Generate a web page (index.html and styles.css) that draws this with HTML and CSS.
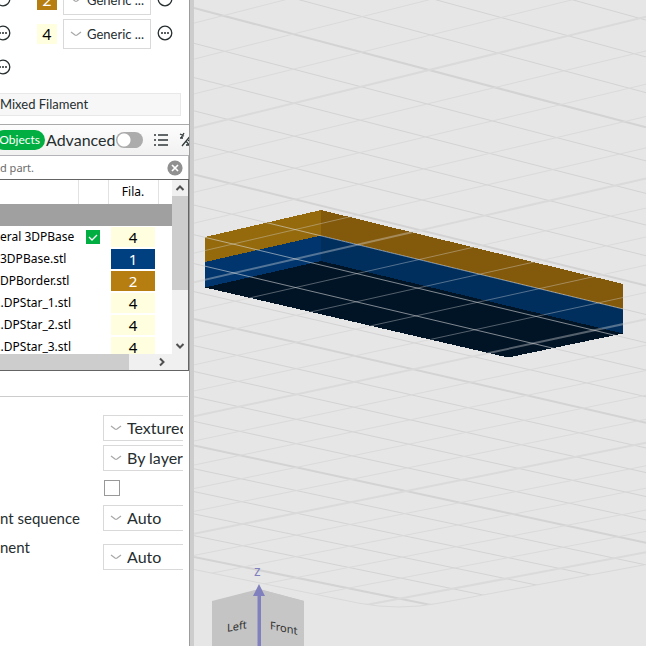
FILE: index.html
```
<!DOCTYPE html>
<html lang="en">
<head>
<meta charset="utf-8">
<meta name="viewport" content="width=device-width, initial-scale=1">
<title>Slicer</title>
<link rel="stylesheet" href="styles.css">
</head>
<body>
<svg class="defs" aria-hidden="true">
  <symbol id="chevron" viewBox="0 0 12 6"><path d="M1 1 L5 4 Q6 4.6 7 4 L11 1" fill="none" stroke="#a8a8a8" stroke-width="1.2"/></symbol>
  <symbol id="more" viewBox="0 0 16 16"><circle cx="8" cy="8" r="6.8" fill="none" stroke="#262e30" stroke-width="1.3"/><path d="M4 7.2h2v1.6h-2zM7 7.2h2v1.6h-2zM10 7.2h2v1.6h-2z" fill="#262e30"/></symbol>
</svg>
<aside class="sidebar">
  <section class="filaments">
    <div class="filament">
      <button class="icon" aria-label="More"><svg><use href="#more"/></svg></button>
      <span class="swatch gold">2</span>
      <span class="pick"><select aria-label="Filament 2"><option>Generic ...</option></select><svg><use href="#chevron"/></svg></span>
      <button class="icon" aria-label="More"><svg><use href="#more"/></svg></button>
    </div>
    <div class="filament">
      <button class="icon" aria-label="More"><svg><use href="#more"/></svg></button>
      <span class="swatch cream">4</span>
      <span class="pick"><select aria-label="Filament 4"><option>Generic ...</option></select><svg><use href="#chevron"/></svg></span>
      <button class="icon" aria-label="More"><svg><use href="#more"/></svg></button>
    </div>
    <div class="filament">
      <button class="icon" aria-label="More"><svg><use href="#more"/></svg></button>
    </div>
  </section>
  <button class="mixed">Mixed Filament</button>
  <div class="toolbar">
    <button class="pill">Objects</button>
    <label for="advanced">Advanced</label>
    <input type="checkbox" role="switch" id="advanced" class="switch">
    <button class="tool" aria-label="List"><svg viewBox="0 0 16 16"><path d="M1 3h2M1 8h2M1 13h2M5 3h10M5 8h10M5 13h10" stroke="#30383a" stroke-width="1.4" fill="none"/></svg></button>
    <button class="tool" aria-label="Compare"><svg viewBox="0 0 16 16"><path d="M1 2l4 2M5 1L2 6M1 6h3M3 14L12 3M7 9l4 5M9 8l4 3M7 13h5" stroke="#30383a" stroke-width="1.3" fill="none"/></svg></button>
  </div>
  <div class="search">
    <input type="text" aria-label="Search" value="d part.">
    <button aria-label="Clear"><svg viewBox="0 0 16 16"><circle cx="8" cy="8" r="7.6" fill="#909090"/><path d="M5 5l6 6M11 5l-6 6" stroke="#fff" stroke-width="1.7"/></svg></button>
  </div>
  <div class="objects">
    <div class="rows">
      <table>
        <thead><tr><th class="name"></th><th class="print"></th><th class="fila">Fila.</th><th></th></tr></thead>
        <tbody>
          <tr class="plate"><td colspan="4"></td></tr>
          <tr><td class="name">eral 3DPBase</td><td class="print"><span class="tick"><input type="checkbox" aria-label="Printable" checked><svg viewBox="0 0 14 14"><path d="M3 7l3 3 5-5" fill="none" stroke="#fff" stroke-width="1.3"/></svg></span></td><td><span class="cell cream">4</span></td><td></td></tr>
          <tr><td class="name part">3DPBase.stl</td><td></td><td><span class="cell blue">1</span></td><td></td></tr>
          <tr><td class="name part">DPBorder.stl</td><td></td><td><span class="cell gold">2</span></td><td></td></tr>
          <tr><td class="name">.DPStar_1.stl</td><td></td><td><span class="cell cream">4</span></td><td></td></tr>
          <tr><td class="name">.DPStar_2.stl</td><td></td><td><span class="cell cream">4</span></td><td></td></tr>
          <tr><td class="name">.DPStar_3.stl</td><td></td><td><span class="cell cream">4</span></td><td></td></tr>
        </tbody>
      </table>
    </div>
    <div class="vbar">
      <svg viewBox="0 0 16 16"><path d="M4.500 10L8 6.500l3.500 3.500" fill="none" stroke="#505050" stroke-width="2"/></svg>
      <div class="vthumb"></div>
      <svg viewBox="0 0 16 16"><path d="M4.500 6L8 9.500l3.500-3.500" fill="none" stroke="#505050" stroke-width="2"/></svg>
    </div>
    <div class="hbar"><div class="hthumb"></div><svg viewBox="0 0 16 16"><path d="M6 4.500L9.500 8L6 11.500" fill="none" stroke="#505050" stroke-width="2"/></svg></div>
  </div>
  <form class="settings">
    <div class="field"><span class="pick"><select aria-label="Plate type"><option>Textured</option></select><svg><use href="#chevron"/></svg></span></div>
    <div class="field"><span class="pick"><select aria-label="Print order"><option>By layer</option></select><svg><use href="#chevron"/></svg></span></div>
    <div class="field"><input class="box" type="checkbox" aria-label="Vase"></div>
    <div class="field"><label for="seq">nt sequence</label><span class="pick"><select id="seq"><option>Auto</option></select><svg><use href="#chevron"/></svg></span></div>
    <div class="field tall"><label for="fil">nent</label><span class="pick"><select id="fil"><option>Auto</option></select><svg><use href="#chevron"/></svg></span></div>
  </form>
</aside>
<main class="scene">
  <svg viewBox="194 0 452 646" preserveAspectRatio="xMinYMin slice">
    <defs>
      <clipPath id="bed"><path d="M194 0H646V564.500L440 603Q399 611 358 603L194 569.500Z"/></clipPath>
      <clipPath id="solid"><path d="M205 237L321 210L623 284V333.500L508 357.500L205 287.500Z"/></clipPath>
    </defs>
    <g id="grid" clip-path="url(#bed)"></g>
    <path d="M194 569.500L358 603Q399 611 440 603L646 564.500" fill="none" stroke="#d9d9d9"/>
    <g shape-rendering="crispEdges">
      <path d="M205 237L321 210V236L205 262.500Z" fill="#946a0d"/>
      <path d="M321 210L623 284V309.500L321 236Z" fill="#83590b"/>
      <path d="M205 262L321 235.500V262L205 288Z" fill="#00366d"/>
      <path d="M321 235.500L623 309V334L321 262Z" fill="#002f5e"/>
      <path d="M205 287.500L321 261L623 333.500L508 357.500Z" fill="#001426"/>
    </g>
    <g id="overlay" clip-path="url(#solid)"></g>
    <path d="M212 601L259 589L304 601V646H212Z" fill="#c4c4c4"/>
    <path d="M259 589L304 601V646H259Z" fill="#c6c6c6"/>
    <text class="face" transform="translate(227 632) skewY(-11)">Left</text>
    <text class="face" transform="translate(270 629) skewY(12)">Front</text>
    <path d="M257.500 595h3.500v51h-3.500zM259 584l6 12h-12z" fill="#8180bf"/>
    <text class="axis" x="254" y="576">z</text>
  </svg>
</main>
<script src="grid.js"></script>
</body>
</html>
```
FILE: styles.css
```
* { box-sizing: border-box; }
body {
  margin: 0;
  display: flex;
  min-height: 100vh;
  overflow: hidden;
  font: 13px/20px Lato, "Noto Sans", sans-serif;
  color: #262e30;
  background: #fff;
}
button { padding: 0; border: 0; background: none; font: inherit; color: inherit; }
input { margin: 0; }
svg { display: block; }
.defs { position: absolute; width: 0; height: 0; }
.sidebar {
  flex: 0 0 194px;
  height: 100vh;
  overflow: hidden;
  border-right: 4px solid #cdcdcd;
  box-shadow: inset -1px 0 #9c9c9c;
  padding-right: 1px;
}
.filaments {
  display: flex;
  flex-direction: column;
  gap: 4px;
  margin-top: -15px;
}
.filament { display: flex; align-items: center; height: 30px; margin-left: -5px; }
.icon { margin-bottom: 2px; }
.icon, .icon svg { width: 16px; height: 16px; }
.swatch {
  width: 20px;
  height: 20px;
  margin: 0 6px 0 26px;
  font-size: 16px;
  text-align: center;
}
.cream { background: #ffffdf; color: #000; }
.gold { background: #b67e10; color: #fff; }
.blue { background: #003f80; color: #fff; }
.pick { display: grid; align-items: center; }
.pick > * { grid-area: 1 / 1; }
.pick select {
  appearance: none;
  border: 1px solid #d9d9d9;
  border-radius: 0;
  background: #fff;
  color: #262e30;
  font: inherit;
  height: 26px;
  padding: 0 0 0 23px;
}
.pick svg { width: 12px; height: 6px; margin-left: 7px; pointer-events: none; }
.filament .pick { width: 88px; margin-right: 6px; }
.filament .pick select { height: 30px; }
.mixed {
  display: block;
  width: 181px;
  height: 23px;
  margin: 10px 0 8px;
  padding-bottom: 2px;
  border: 1px solid #e8e8e8;
  border-left: 0;
  background: #f7f7f7;
  text-align: left;
}
.toolbar {
  display: flex;
  align-items: center;
  height: 32px;
  padding-bottom: 1px;
  border-top: 1px solid #aaa;
  border-bottom: 1px solid #b3b3b8;
  background: linear-gradient(#fdfdfd, #f1f1f1);
  overflow: hidden;
}
.pill {
  flex: none;
  width: 51px;
  height: 20px;
  margin-left: -6px;
  padding-right: 5px;
  border-radius: 10px;
  background: #00ae42;
  color: #fff;
  font-size: 12px;
  text-align: right;
}
.toolbar label { flex: none; width: 71px; padding-left: 1px; font-size: 16px; }
.switch {
  appearance: none;
  flex: none;
  width: 27px;
  height: 16px;
  border-radius: 8px;
  background: radial-gradient(circle at 8px 8px, #fff 6px, #acacac 7px);
}
.tool { flex: none; width: 16px; height: 16px; margin-left: 10px; }
.search { display: flex; align-items: center; height: 23px; border-right: 1px solid #b3b3b8; }
.search input {
  flex: 1;
  min-width: 0;
  border: 0;
  padding: 0;
  font: 11px/20px "Noto Sans", sans-serif;
  color: #6b6b6b;
}
.search button { width: 16px; height: 16px; margin-right: 5px; }
.objects {
  display: grid;
  grid-template: 174px 16px / 1fr 16px;
  border: solid #646464;
  border-width: 1px 1px 1px 0;
  font: 12px/22px "Noto Sans", sans-serif;
  color: #000;
}
.rows { overflow: hidden; }
table { table-layout: fixed; width: 100%; border-collapse: collapse; }
th, td { height: 22px; padding: 0; font-weight: 400; }
th { height: 24px; border-right: 1px solid #e2e2e2; }
th:last-child { border: 0; }
th.name { width: 78px; }
th.print { width: 30px; }
th.fila { width: 50px; }
td.name { text-align: right; padding-right: 7px; white-space: nowrap; }
td.part { padding-right: 12px; }
.plate td { background: #a0a0a0; }
.cell { display: block; width: 44px; height: 20px; margin: 0 auto 0 3px; font-size: 15px; line-height: 20px; text-align: center; }
.tick { display: grid; width: 14px; margin-left: 8px; }
.tick > * { grid-area: 1 / 1; width: 14px; height: 14px; pointer-events: none; }
.tick input { appearance: none; background: #00ae42; }
.vbar, .hbar { display: flex; background: #f0f0f0; }
.vbar { flex-direction: column; }
.vbar svg { height: 16px; }
.vbar svg:last-child { margin-top: auto; }
.vthumb { height: 94px; background: #cdcdcd; }
.hbar { grid-column: 1 / 3; }
.hthumb { width: 129px; background: #cdcdcd; margin-right: 25px; }
.hbar svg { width: 16px; }
.settings {
  margin-top: 25px;
  margin-right: 1px;
  padding: 18px 5px 0 0;
  border-top: 1px solid #ccc;
  font-size: 16px;
}
.field { display: flex; align-items: center; justify-content: flex-end; height: 26px; margin-bottom: 4px; }
.field .pick { flex: none; width: 80px; overflow: hidden; }
.field .pick select { width: 120px; }
.field label { flex: 1; font-size: 15px; }
.box { appearance: none; width: 16px; height: 16px; margin-right: 63px; border: 1px solid #999; }
.tall { height: 44px; align-items: flex-start; }
.tall label { padding-top: 2px; }
.tall .pick { margin-top: 9px; }
.scene { flex: 1; min-width: 0; height: 100vh; background: #e6e6e6; }
.scene svg { width: 100%; height: 100%; }
.face { font: 11px "Noto Sans", sans-serif; fill: #333; }
.axis { font: 14px "Noto Sans", sans-serif; fill: #8180bf; }
```
FILE: grid.js
```
// Perspective spacing: height of line i of a family along a vertical edge.
const at = (start, step, shrink, i) => (start + step * i) / (1 + shrink * i);

const families = [
  { left: [8, 35.99, 0.015336], right: [127.3, 36.045, 0.01539], color: "#d3d3d3", over: 0.58 },
  { left: [127.7, 35.22, 0.01528], right: [16.7, 35, 0.014886], color: "#dadada", over: 0.38 }
];

function draw(group, styleOf) {
  for (const family of families) {
    for (let i = -3; i <= 20; i++) {
      const line = document.createElementNS("http://www.w3.org/2000/svg", "line");
      const attrs = {
        x1: 194, y1: at(...family.left, i),
        x2: 646, y2: at(...family.right, i),
        "stroke-width": i % 5 === 0 ? 2 : 1,
        ...styleOf(family)
      };
      for (const key in attrs) line.setAttribute(key, attrs[key]);
      group.append(line);
    }
  }
}

draw(document.getElementById("grid"), f => ({ stroke: f.color }));
draw(document.getElementById("overlay"), f => ({ stroke: "#dcdcdc", "stroke-opacity": f.over }));
```
